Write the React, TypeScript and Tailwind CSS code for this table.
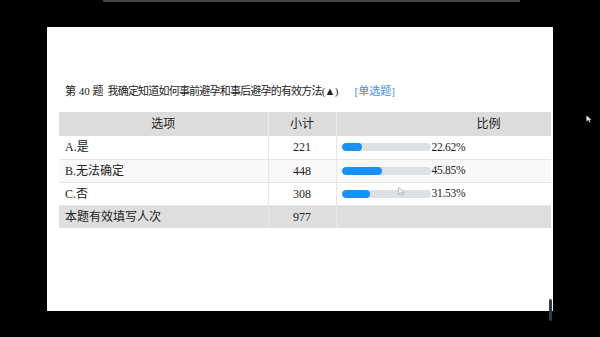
const font = "font-['Liberation_Serif','Noto_Sans_CJK_SC',serif]";

const rows = [
  { label: "A.是", count: 221, pct: 22.62 },
  { label: "B.无法确定", count: 448, pct: 45.85 },
  { label: "C.否", count: 308, pct: 31.53 },
];

function Bar({ pct }: { pct: number }) {
  return (
    <div className="flex items-center">
      <div className="ml-[5px] h-[8px] w-[89px] overflow-hidden rounded-full bg-[#dde0e4]">
        <div className="h-full rounded-full bg-[#1890ff]" style={{ width: `${pct}%` }} />
      </div>
      <span className="ml-[1px] text-[11.5px] tracking-[-0.3px]">{pct.toFixed(2)}%</span>
    </div>
  );
}

export default function App() {
  return (
    <div className={`relative h-[337px] w-[600px] overflow-hidden bg-black ${font}`}>
      <div className="ml-[103px] h-[2px] w-[417px] bg-[#444]" />

      <div className="ml-[47px] mt-[25px] h-[284px] w-[506px] bg-white pl-[12px] pt-[55px]">
        <div className="flex h-[18px] items-center text-[11px] leading-[18px] text-[#222]">
          <span className="ml-[6px]">第 40 题</span>
          <span className="ml-[4px] tracking-[-0.8px]">我确定知道如何事前避孕和事后避孕的有效方法(▲)</span>
          <span className="ml-[17px] text-[#3d8fe6]">[单选题]</span>
        </div>

        <table className="mt-[12px] w-[492px] border-collapse text-[12px] text-[#222]">
          <thead>
            <tr className="h-[24px] bg-[#dcdcdc]">
              <th className="w-[209px] border-r border-[#e8e8e8] font-normal">选项</th>
              <th className="w-[68px] border-r border-[#e8e8e8] font-normal">小计</th>
              <th className="pl-[140px] text-left font-normal">比例</th>
            </tr>
          </thead>
          <tbody>
            {rows.map((row, i) => (
              <tr
                key={row.label}
                className={`h-[23px] border-b border-[#e6e6e6] ${i === 1 ? "bg-[#f9f9f9]" : "bg-white"}`}
              >
                <td className="border-r border-[#e6e6e6] pl-[6px]">{row.label}</td>
                <td className="border-r border-[#e6e6e6] text-center">{row.count}</td>
                <td>
                  <Bar pct={row.pct} />
                </td>
              </tr>
            ))}
            <tr className="h-[23px] bg-[#dedede]">
              <td className="border-r border-[#e8e8e8] pl-[6px]">本题有效填写人次</td>
              <td className="border-r border-[#e8e8e8] text-center">977</td>
              <td></td>
            </tr>
          </tbody>
        </table>
      </div>

      {/* cursor inside the table */}
      <svg className="absolute left-[398px] top-[187px]" width="7" height="9" viewBox="0 0 7 9">
        <path d="M0.5 0.5 L0.5 7.5 L2.5 5.8 L4 8.5 L5 8 L3.8 5.3 L6.5 5.3 Z" fill="#f4f4f4" stroke="#b0b0b0" strokeWidth="0.8" />
      </svg>

      {/* cursor on the dark margin */}
      <svg className="absolute left-[586px] top-[115px]" width="6" height="8" viewBox="0 0 7 9">
        <path d="M0.5 0.5 L0.5 7.5 L2.5 5.8 L4 8.5 L5 8 L3.8 5.3 L6.5 5.3 Z" fill="#e8e8e8" />
      </svg>

      <div className="absolute left-[549px] top-[299px] h-[22px] w-[3px] rounded-sm bg-[#2c3b4a]" />
    </div>
  );
}
